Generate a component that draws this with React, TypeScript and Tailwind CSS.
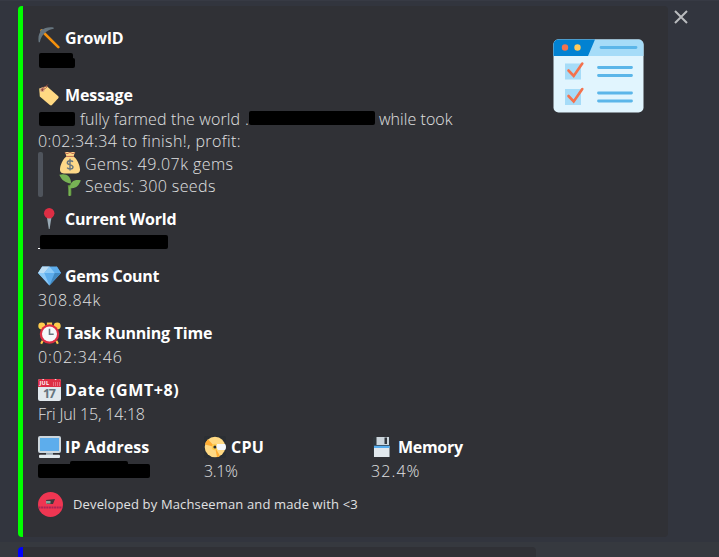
import type { ReactNode } from 'react';

const Pick = () => (
  <svg viewBox="0 0 22 22" className="size-[22px]">
    <path d="M3.5 3.5 20.300 20.200" stroke="#f4900c" strokeWidth="2.600" strokeLinecap="round" />
    <path d="M.7 15.200C-1 5 5-.9 15.500.500l.3 1.200C9.500 2.800 3.500 6.500 1.800 15.200Z" fill="#66757f" />
    <path d="m2 4 2.500-2.300L6.300 4 4 6Z" fill="#66757f" />
  </svg>
);

const Tag = () => (
  <svg viewBox="0 0 22 22" className="size-[22px]">
    <path d="M1.200 4.500 8.800 2.300 20 12c.8.800.8 1.500.2 2.300l-6 6.500c-.8.800-1.600.7-2.400.1L1.800 12.500Z" fill="#ffd983" />
    <circle cx="4.300" cy="5.800" r="2.300" fill="#d99e82" />
    <circle cx="4.300" cy="5.800" r=".9" fill="#662113" />
    <path d="M4.300 5.600C4 2.500 8 3.500 9.800.5M4.300 5.500C7 5 8.500 4 9.500 2" fill="none" stroke="#a0554a" strokeWidth=".9" />
  </svg>
);

const MoneyBag = () => (
  <svg viewBox="0 0 22 22" className="size-[22px]">
    <path d="M6 0h10l-1.500 4.500c3.500 2 6.500 9 6.500 13 0 3-2 4-5 4H6c-3 0-5-1-5-4 0-4 3-11 6.500-13Z" fill="#fdd888" />
    <path d="M5.800.5 8 1.700 11 .4l3 1.300L16.200.5M7.200 4.400h7.600" fill="none" stroke="#bf6952" strokeWidth="1" />
    <path d="M13.900 9.800C13 8.300 8.300 8.200 8.300 10.800c0 2.700 5.700 1.500 5.700 4.200 0 2.600-4.800 2.300-5.800.7M11 6.800v11.700" fill="none" stroke="#67757f" strokeWidth="1.400" />
  </svg>
);

const Seedling = () => (
  <svg viewBox="0 0 22 22" className="size-[22px]">
    <path d="M10.800 21.500c.3-6 .1-8-.7-10.500" fill="none" stroke="#5c913b" strokeWidth="3" />
    <path d="M.3.800C7-1 12 2 12 9.500 6 9 2.500 6 .3.800Z" fill="#77b255" />
    <path d="M21.800 6.300C16 5 11 7 10.800 14c6 1 9-2 11-7.700Z" fill="#77b255" />
    <path d="M10.600 12.500V22" stroke="#77b255" strokeWidth="1.800" />
  </svg>
);

const Pin = () => (
  <svg viewBox="0 0 22 22" className="size-[22px]">
    <path d="M8.800 8.500h4.800L11.600 21h-.8Z" fill="#99aab5" />
    <circle cx="11.200" cy="5.200" r="5.200" fill="#dd2e44" />
  </svg>
);

const Gem = () => (
  <svg viewBox="0 0 22 22" className="h-[22px] w-[23px]" preserveAspectRatio="none">
    <path d="M4 1.500h14L22 8 11 20.500 0 8Z" fill="#5dadec" />
    <path d="M4 1.500 0 8h6l5-6.500Z" fill="#bdddf4" />
    <path d="m11 1.500 5 6.500H6Z" fill="#8ccaf7" />
    <path d="m0 8h6l5 12.500Z" fill="#8ccaf7" />
    <path d="m16 8-5 12.500L22 8Z" fill="#4289c1" />
    <path d="m18 1.500 4 6.500h-6Z" fill="#5dadec" />
  </svg>
);

const Clock = () => (
  <svg viewBox="0 0 22 22" className="size-[23px]">
    <path d="m4.500 18-1.500 2.800M17.500 18l1.500 2.800" stroke="#ffcc4d" strokeWidth="2" />
    <circle cx="3.600" cy="3.800" r="3.300" fill="#ffcc4d" />
    <circle cx="18.400" cy="3.800" r="3.300" fill="#ffcc4d" />
    <path d="M8.500.500h5v3h-5Z" fill="#ffcc4d" />
    <circle cx="11" cy="11.500" r="9.300" fill="#dd2e44" />
    <circle cx="11" cy="11.500" r="7.200" fill="#f5f8fa" />
    <path d="M11 6.500v5.300h4" fill="none" stroke="#66757f" strokeWidth="1.500" />
  </svg>
);

const Calendar = () => (
  <svg viewBox="0 0 23 22" className="h-[22px] w-[23px]">
    <rect y="0" width="23" height="22" rx="2" fill="#e1e8ed" />
    <path d="M0 8V2a2 2 0 0 1 2-2h2l1.200 1.300L6.400 0h10l1.200 1.300L18.800 0H21a2 2 0 0 1 2 2v6Z" fill="#dd2e44" />
    <text x="1.500" y="6.300" fontSize="5.500" fontWeight="700" textLength="9.500" fill="#fff" fontFamily="Open Sans, sans-serif">JUL</text>
    <path d="M15 4h7M15 6h7" stroke="#f4abba" strokeDasharray="1 1" />
    <text x="11.500" y="19.300" fontSize="12.500" fontWeight="700" textAnchor="middle" textLength="13" fill="#66757f" fontFamily="Open Sans, sans-serif">17</text>
  </svg>
);

const Monitor = () => (
  <svg viewBox="0 0 23 22" className="h-[22px] w-[23px]">
    <rect width="23" height="17" rx="2" fill="#ccd6dd" />
    <rect x="2" y="2" width="19" height="13" fill="#5dadec" />
    <path d="M8 17h7v2H8Z" fill="#9aaab4" />
    <rect x="1" y="18.800" width="21" height="3.200" rx="1" fill="#e1e8ed" />
  </svg>
);

const Disc = () => (
  <svg viewBox="0 0 22 22" className="size-[22px]">
    <rect width="22" height="22" rx="2" fill="#2a2e33" />
    <circle cx="11" cy="11" r="10.300" fill="#ffd983" />
    <path d="M11 11 1 8.500a10.300 10.300 0 0 1 3-5.200ZM11 11l5 9a10.300 10.300 0 0 1-3 1.100Z" fill="#ffac33" />
    <circle cx="11" cy="11" r="3.200" fill="#ffcc4d" />
    <circle cx="11" cy="11" r="1.600" fill="#292f33" />
    <path d="M13 8h8c1.300 1 1.300 5 0 6h-7c-1.500-1-2-4-1-6Z" fill="#f5f8fa" />
  </svg>
);

const Floppy = () => (
  <svg viewBox="0 0 22 22" className="size-[22px]">
    <path d="M3 1h16v20H3l-1-1V2Z" fill="#31373d" />
    <path d="M5.500 1h12.500v8H5.500Z" fill="#ccd6dd" />
    <path d="M13.500 1.500h2.500v6.500h-2.500Z" fill="#31373d" />
    <path d="M3 10h15.500v11H3Z" fill="#e1e8ed" />
    <path d="M3 9.700h15.500V12H3Z" fill="#55acee" />
  </svg>
);

const Checklist = () => (
  <svg viewBox="0 0 91 74" className="h-[74px] w-[91px]">
    <rect x=".5" y=".5" width="90" height="73" rx="5" fill="#e1f5fe" />
    <path d="M.5 17V5.500a5 5 0 0 1 5-5h80a5 5 0 0 1 5 5V17Z" fill="#a6dcf8" />
    <path d="M.5 17V5.500a5 5 0 0 1 5-5H42L35 17Z" fill="#0282d2" />
    <circle cx="12" cy="8.500" r="3.200" fill="#f4724d" />
    <circle cx="24.500" cy="8.500" r="3.200" fill="#ffca5c" />
    <path d="M12 24.500h16v16H12ZM12 50h16v16H12Z" fill="#a6dcf8" />
    <path d="m15.500 31.500 5.200 5.500 8.600-12.500M15.500 57l5.200 5.500L29.300 50" fill="none" stroke="#f4724d" strokeWidth="2.600" strokeLinecap="round" />
    <path d="M48 8.500h35M45.500 28.500h33M45.500 36.500h33M45.500 54h33M45.500 62h33" stroke="#5bb6e9" strokeWidth="2.800" strokeLinecap="round" />
  </svg>
);

const Avatar = () => (
  <svg viewBox="0 0 25 25" className="size-[25px]">
    <circle cx="12.500" cy="12.500" r="12.500" fill="#ef3652" />
    <path d="M.5 15.500h24" stroke="#a92657" strokeWidth="1.800" strokeDasharray="2 .6" />
    <path d="m8 8 9-1-2 5H9Z" fill="#40383c" />
    <path d="M8 9h4.500v2.500H8Z" fill="#7faa9f" />
  </svg>
);

function Field({ icon, title, children, className = '' }: { icon: ReactNode; title: ReactNode; children: ReactNode; className?: string }) {
  return (
    <section className={className}>
      <h2 className="flex h-6 items-center whitespace-nowrap text-[16px] leading-6 font-bold text-white">
        <span className="flex w-[27px] shrink-0">{icon}</span>
        {title}
      </h2>
      <div className="h-[22px] leading-[24px] whitespace-nowrap">{children}</div>
    </section>
  );
}

export default function App() {
  return (
    <main className="h-[557px] w-[719px] overflow-hidden bg-[#36393f] font-['Open_Sans',sans-serif] text-[16px] font-[340] text-[#e0e1e2]">
      <div className="flex h-[542px] items-start border-t border-[#373a44] bg-[#32353e] pt-[5px] pl-[18px]">
        <article className="relative h-[531px] w-[650px] overflow-hidden rounded-[4px] border-l-[5px] border-[#00ff00] bg-[#303136] pt-5 pl-[15px]">
          <div className="flex flex-col gap-[11px]">
            <Field icon={<Pick />} title={<span className="tracking-[-0.2px]">GrowID</span>}>
              <div className="pt-[3px] pl-[1px]"><div className="flex h-[15px] flex-col"><i className="h-[5px] w-[34px] rounded-t-[2px] bg-black" /><i className="h-[10px] w-9 rounded-[2px] rounded-tl-none bg-black" /></div></div>
            </Field>
            <section className="h-[113px]">
              <h2 className="flex h-6 items-center text-[16px] font-bold text-white"><span className="w-[27px]"><Tag /></span><span className="tracking-[-0.1px]">Message</span></h2>
              <p className="flex h-[22px] items-center whitespace-nowrap leading-[22px]">
                <i className="mt-[2px] ml-[1px] h-[14px] w-9 rounded-[2px] bg-black" />
                <span className="mt-[2px] ml-[5px] w-[163px] tracking-[0.14px]">fully farmed the world</span>
                <span className="mt-[2px] w-[6px] pl-[2px]">.</span>
                <i className="mr-[4px] h-[14px] w-[126px] rounded-[2px] bg-black" />
                <span className="mt-[2px] tracking-[0.05px]">while took</span>
              </p>
              <p className="h-[23px] leading-[25px] tracking-[0.4px] whitespace-nowrap">0:02:34:34 to finish!, profit:</p>
              <blockquote className="flex h-[45px]">
                <span className="mr-[16px] w-[5px] rounded-[2px] bg-[#4f545c]" />
                <div className="leading-[24px]">
                  <p className="flex h-[22px] gap-[4px] tracking-[0.45px]"><MoneyBag /><span>Gems: 49.07k gems</span></p>
                  <p className="flex h-[22px] gap-[4px] tracking-[0.37px]"><Seedling /><span>Seeds: 300 seeds</span></p>
                </div>
              </blockquote>
            </section>
            <Field icon={<Pin />} title={<span className="tracking-[-0.2px]">Current World</span>}>
              <div className="flex items-center pt-[4px]"><span className="h-[14px] w-[2px] border-b border-white" /><i className="h-[14px] w-32 rounded-[2px] bg-black" /></div>
            </Field>
            <Field icon={<Gem />} title={<span className="tracking-[-0.27px]">Gems Count</span>}><span className="tracking-[0.85px]">308.84k</span></Field>
            <Field icon={<Clock />} title={<span className="tracking-[-0.22px]">Task Running Time</span>}><span className="tracking-[0.95px]">0:02:34:46</span></Field>
            <Field icon={<Calendar />} title={<span className="tracking-[0.6px]">Date (GMT+8)</span>}><span className="tracking-[-0.15px]">Fri Jul 15, 14:18</span></Field>
            <div className="flex">
              <Field className="w-[166px]" icon={<Monitor />} title={<span className="tracking-[0.1px]">IP Address</span>}>
                <div className="pt-[2px]"><div className="ml-[32px] h-[3px] w-[58px] rounded-t-[2px] bg-black" /><div className="h-[14px] w-[112px] rounded-[2px] bg-black" /></div>
              </Field>
              <Field className="w-[167px]" icon={<Disc />} title={<span className="tracking-[0.3px]">CPU</span>}><span className="tracking-[-0.4px]">3.1%</span></Field>
              <Field icon={<Floppy />} title={<span className="tracking-[-0.3px]">Memory</span>}><span className="tracking-[1.1px]">32.4%</span></Field>
            </div>
          </div>
          <footer className="mt-[11px] flex h-[25px] items-center gap-[10px] text-[13px] font-normal"><Avatar /><span className="tracking-[0.14px]">Developed by Machseeman and made with &lt;3</span></footer>
          <div className="absolute top-[33px] right-[24px]"><Checklist /></div>
        </article>
        <svg viewBox="0 0 14 14" className="mt-[4px] ml-[6px] size-[14px]"><path d="m1 1 12 12M13 1 1 13" stroke="#b9bbbe" strokeWidth="2" /></svg>
      </div>
      <div className="pt-[5px] pl-[18px]"><div className="h-5 w-[518px] rounded-[4px] border-l-[5px] border-[#0000ff] bg-[#303136]" /></div>
    </main>
  );
}
